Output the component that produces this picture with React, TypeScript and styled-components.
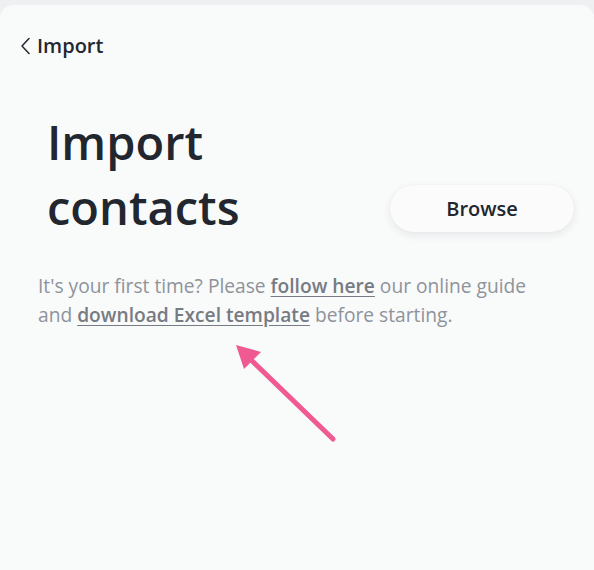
import styled, { createGlobalStyle } from 'styled-components';

const GlobalStyle = createGlobalStyle`
    html, body {
        margin: 0;
        padding: 0;
        background: #eff0f2;
        font-family: "Open Sans", "Noto Sans", sans-serif;
    }
`;

const Card = styled.div`
    position: relative;
    margin-top: 5px;
    height: 565px;
    box-sizing: border-box;
    background: #f9fafa;
    border-radius: 14px 14px 0 0;
    padding: 27px 20px 0 20px;
`;

const BackLink = styled.a`
    display: inline-flex;
    align-items: center;
    gap: 5px;
    color: #23272f;
    font-size: 20px;
    font-weight: 600;
    text-decoration: none;
    cursor: pointer;
`;

const Header = styled.div`
    display: flex;
    align-items: flex-end;
    justify-content: space-between;
    margin-top: 50px;
    padding-left: 27px;
`;

const Title = styled.h1`
    margin: 0;
    font-size: 47px;
    font-weight: 600;
    line-height: 65px;
    color: #22262f;
`;

const BrowseButton = styled.button`
    width: 184px;
    height: 47px;
    margin-bottom: 8px;
    border: none;
    border-radius: 24px;
    background: #fbfbfc;
    box-shadow: 0 3px 8px rgba(30, 40, 60, 0.09), 0 0 1px rgba(30, 40, 60, 0.08);
    font-family: inherit;
    font-size: 20px;
    font-weight: 600;
    color: #22262f;
    cursor: pointer;
`;

const Intro = styled.p`
    margin: 31px 0 0 18px;
    font-size: 19.2px;
    line-height: 29px;
    color: #8e939a;
`;

const GuideLink = styled.a`
    color: #777b83;
    font-weight: 600;
    text-decoration: underline;
    text-underline-offset: 3px;
    cursor: pointer;
`;

const Pointer = styled.svg`
    position: absolute;
    left: 230px;
    top: 330px;
`;

const Chevron = () => (
    <svg width="12" height="18" viewBox="0 0 12 18" fill="none">
        <path d="M9 1.5L2 9l7 7.5" stroke="#23272f" strokeWidth="1.5" strokeLinecap="round" strokeLinejoin="round" />
    </svg>
);

export default function App() {
    return (
        <>
            <GlobalStyle />
            <Card>
                <BackLink>
                    <Chevron />
                    Import
                </BackLink>

                <Header>
                    <Title>
                        Import
                        <br />
                        contacts
                    </Title>
                    <BrowseButton>Browse</BrowseButton>
                </Header>

                <Intro>
                    It's your first time? Please <GuideLink>follow here</GuideLink> our online guide
                    <br />
                    and <GuideLink>download Excel template</GuideLink> before starting.
                </Intro>

                <Pointer width="110" height="110" viewBox="0 0 110 110">
                    <path d="M103 104L16 20" stroke="#ef5a92" strokeWidth="5" strokeLinecap="round" />
                    <path d="M6 10L31 17L14 34Z" fill="#ef5a92" />
                </Pointer>
            </Card>
        </>
    );
}
